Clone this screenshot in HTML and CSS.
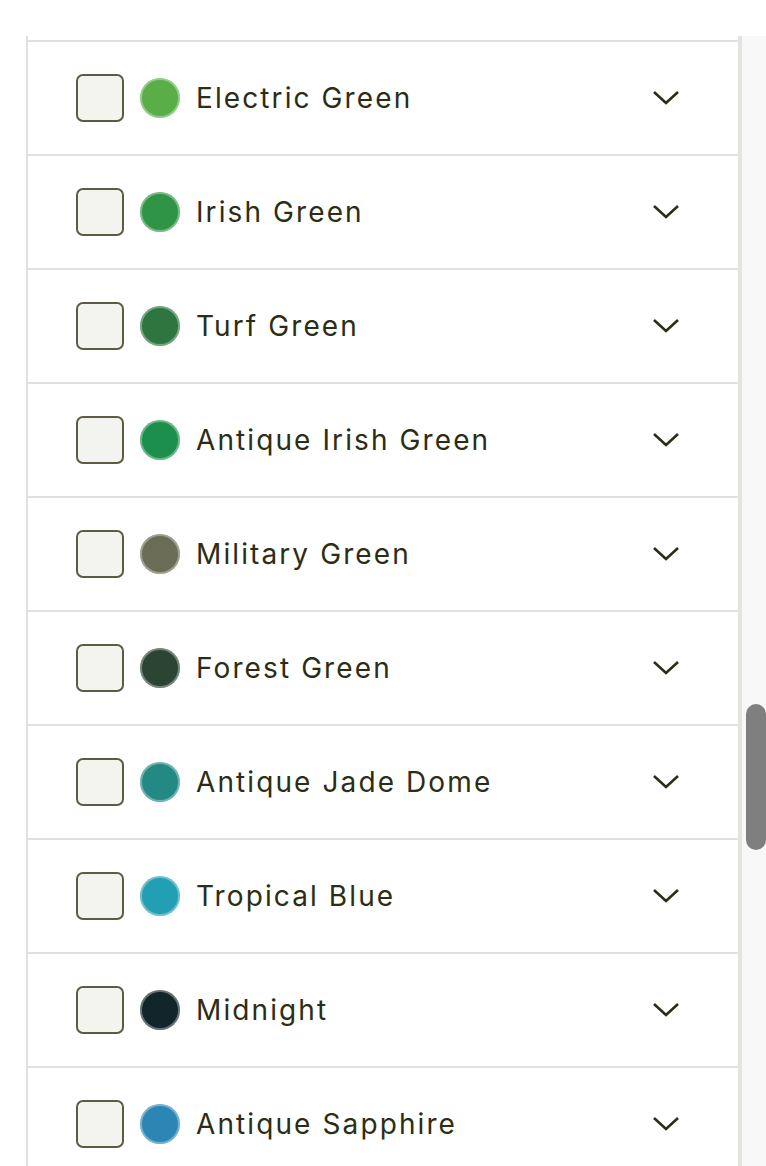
FILE: index.html
```html
<!DOCTYPE html>
<html lang="en">
<head>
  <meta charset="UTF-8">
  <meta name="viewport" content="width=device-width, initial-scale=1.0">
  <title>Colors</title>
  <link rel="stylesheet" href="styles.css">
</head>
<body>
  <div class="page">
    <div class="panel">
      <ul class="color-list">
        <li class="color-row">
          <span class="check"></span>
          <span class="swatch" style="background-color: #5aae48"></span>
          <span class="color-name">Electric Green</span>
          <svg class="chevron" viewBox="0 0 28 16"><path d="M2 2 L14 13 L26 2"/></svg>
        </li>
        <li class="color-row">
          <span class="check"></span>
          <span class="swatch" style="background-color: #2f9445"></span>
          <span class="color-name">Irish Green</span>
          <svg class="chevron" viewBox="0 0 28 16"><path d="M2 2 L14 13 L26 2"/></svg>
        </li>
        <li class="color-row">
          <span class="check"></span>
          <span class="swatch" style="background-color: #2e7640"></span>
          <span class="color-name">Turf Green</span>
          <svg class="chevron" viewBox="0 0 28 16"><path d="M2 2 L14 13 L26 2"/></svg>
        </li>
        <li class="color-row">
          <span class="check"></span>
          <span class="swatch" style="background-color: #1d8f4c"></span>
          <span class="color-name">Antique Irish Green</span>
          <svg class="chevron" viewBox="0 0 28 16"><path d="M2 2 L14 13 L26 2"/></svg>
        </li>
        <li class="color-row">
          <span class="check"></span>
          <span class="swatch" style="background-color: #6a6c55"></span>
          <span class="color-name">Military Green</span>
          <svg class="chevron" viewBox="0 0 28 16"><path d="M2 2 L14 13 L26 2"/></svg>
        </li>
        <li class="color-row">
          <span class="check"></span>
          <span class="swatch" style="background-color: #2c4434"></span>
          <span class="color-name">Forest Green</span>
          <svg class="chevron" viewBox="0 0 28 16"><path d="M2 2 L14 13 L26 2"/></svg>
        </li>
        <li class="color-row">
          <span class="check"></span>
          <span class="swatch" style="background-color: #238a83"></span>
          <span class="color-name">Antique Jade Dome</span>
          <svg class="chevron" viewBox="0 0 28 16"><path d="M2 2 L14 13 L26 2"/></svg>
        </li>
        <li class="color-row">
          <span class="check"></span>
          <span class="swatch" style="background-color: #229fb2"></span>
          <span class="color-name">Tropical Blue</span>
          <svg class="chevron" viewBox="0 0 28 16"><path d="M2 2 L14 13 L26 2"/></svg>
        </li>
        <li class="color-row">
          <span class="check"></span>
          <span class="swatch" style="background-color: #12252b"></span>
          <span class="color-name">Midnight</span>
          <svg class="chevron" viewBox="0 0 28 16"><path d="M2 2 L14 13 L26 2"/></svg>
        </li>
        <li class="color-row">
          <span class="check"></span>
          <span class="swatch" style="background-color: #2b86b6"></span>
          <span class="color-name">Antique Sapphire</span>
          <svg class="chevron" viewBox="0 0 28 16"><path d="M2 2 L14 13 L26 2"/></svg>
        </li>
      </ul>
    </div>
    <div class="scroll-track">
      <div class="scroll-thumb"></div>
    </div>
  </div>
</body>
</html>
```

FILE: styles.css
```css
html, body {
  margin: 0;
  height: 100%;
  overflow: hidden;
  background: #fff;
}
body {
  font-family: Inter, "Liberation Sans", sans-serif;
  color: #2b2d14;
}
.page {
  display: flex;
  margin-top: 36px;
  margin-left: 26px;
  height: 1130px;
}
.panel {
  width: 710px;
  border-left: 2px solid #e1e0da;
  border-right: 4px solid #e4e3e0;
  padding-top: 4px;
}
.color-list {
  list-style: none;
  margin: 0;
  padding: 0;
}
.color-row {
  display: flex;
  align-items: center;
  height: 112px;
  border-top: 2px solid #e1e0da;
  padding-left: 48px;
  padding-right: 58px;
}
.check {
  width: 44px;
  height: 44px;
  border: 2px solid #5e5b45;
  border-radius: 7px;
  background: #f3f4ef;
  flex-shrink: 0;
}
.swatch {
  width: 40px;
  height: 40px;
  border-radius: 50%;
  margin-left: 16px;
  box-shadow: inset 0 0 0 2px rgba(255, 255, 255, 0.35);
  flex-shrink: 0;
}
.color-name {
  flex: 1;
  margin-left: 16px;
  font-size: 28px;
  letter-spacing: 2.1px;
  line-height: 1;
}
.chevron {
  width: 28px;
  height: 16px;
  fill: none;
  stroke: #2b2d14;
  stroke-width: 2.6;
}
.scroll-track {
  flex: 1;
  background: #f8f8f8;
  position: relative;
}
.scroll-thumb {
  position: absolute;
  top: 668px;
  left: 4px;
  right: 0;
  height: 146px;
  background: #7f7f7f;
  border-radius: 10px;
}
```
